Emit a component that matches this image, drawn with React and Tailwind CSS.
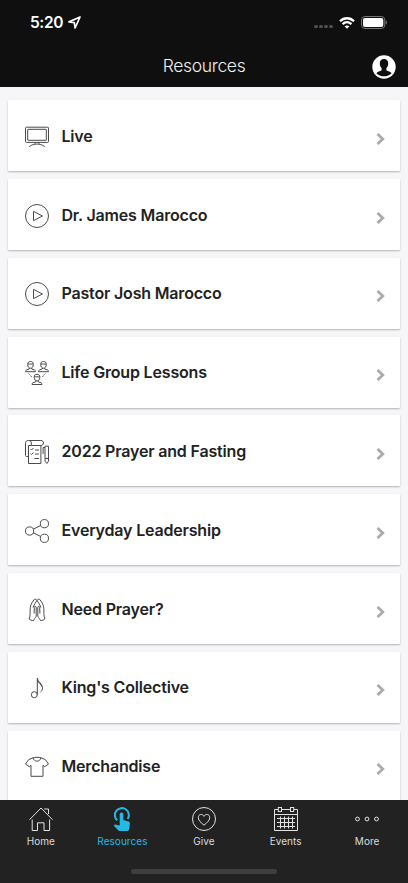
import React from 'react';

const LineIcon = ({ children, className = "text-[#4a4a4a]" }) => (
    <svg
        viewBox="0 0 24 24"
        fill="none"
        stroke="currentColor"
        strokeWidth="1"
        className={`block w-6 h-6 shrink-0 overflow-visible ${className}`}
    >
        {children}
    </svg>
);

const TvIcon = () => (
    <LineIcon>
        <rect x="0.5" y="2.2" width="23" height="15.2" rx="1" />
        <rect x="2.7" y="4.3" width="18.6" height="11" rx="0.3" />
        <path d="M10 17.5v1.4M14 17.5v1.4M4.2 21.6C7 19.6 9.5 19.1 12 19.1s5 .5 7.8 2.5" />
    </LineIcon>
);

const PlayIcon = () => (
    <LineIcon>
        <circle cx="12" cy="12" r="11.5" />
        <path d="M8.5 7.4v9.2l9-4.6z" />
    </LineIcon>
);

const Person = ({ x, y }) => (
    <g transform={`translate(${x} ${y})`}>
        <path d="M2.7 3.6C2.5 1.5 3.7.5 5.5.5s3 1 2.8 3.1c-.1 2.2-1.2 3.6-2.8 3.6S2.8 5.8 2.7 3.6zM2.9 3c1.5.3 3.500-.1 5.200 0" />
        <path d="M4.3 7v1L1.5 8.900C.8 9.200.5 9.700.5 10.700h10c0-1-.3-1.500-1-1.800L6.700 8V7" />
    </g>
);

const GroupIcon = () => (
    <LineIcon>
        <Person x={0} y={0} />
        <Person x={13} y={0} />
        <Person x={6.5} y={12.8} />
        <path d="M3.8 12.500l1 1.200M5.600 14.600l1 1.200M20.200 12.500l-1 1.200M18.400 14.600l-1 1.200" />
    </LineIcon>
);

const NotesIcon = () => (
    <LineIcon>
        <path d="M3.500 16.500H1.500c-.6 0-1-.4-1-1V3.500c0-2 1-3 3-3h12.400c1.600 0 2.500 1 2.500 2.500s-1 2.500-2.500 2.500H6.300V3c0-1.600-1-2.500-2.400-2.500M3.500 5.500v18h12.400v-18M3.500 5.500h2.800" />
        <path d="M5.500 9l1 1 2-2M5.500 13.500l1 1 2-2M10 10h4M10 14h4M9.500 18.500h4.500" />
        <path d="M20 7.500V6.200h3.500v15l-1.700 2.300L20 21.200zM20 7.500h-1.900V14M20 18.500h3.500" />
    </LineIcon>
);

const ShareIcon = () => (
    <LineIcon>
        <circle cx="4.6" cy="12" r="4.1" />
        <circle cx="19.4" cy="4.7" r="4.1" />
        <circle cx="19.4" cy="19.3" r="4.1" />
        <path d="M8.300 10.200l7.400-3.700M8.300 13.800l7.400 3.700" />
    </LineIcon>
);

const PrayIcon = () => (
    <LineIcon>
        <path d="M11.900 2.300C11 .8 9.500.8 8.900 1.900 6.400 5 5.200 7.900 5.100 11.500c0 4.200.2 6.500-1 9.400.7 1 2.600 1.600 4.500 1.700.3-1.500 1.700-2.500 2.600-4.400V9.300c0-1.200-1.800-1.200-1.900 0l-.2 6.200" />
        <path d="M12.100 2.300C13 .8 14.500.8 15.100 1.900c2.500 3.100 3.700 6 3.800 9.600 0 4.200-.2 6.500 1 9.400-.7 1-2.600 1.600-4.500 1.700-.3-1.500-1.700-2.500-2.600-4.400V9.300c0-1.200 1.800-1.200 1.900 0l.2 6.200" />
        <path d="M12 2.300C10.600 4.800 9.100 6.300 8.100 9.500M12 2.300c1.400 2.500 2.900 4 3.900 7.200" />
    </LineIcon>
);

const MusicIcon = () => (
    <LineIcon>
        <circle cx="9.300" cy="18.700" r="3" />
        <path d="M12.300 18.700V2.200c.4 4.300 5.200 5.100 5.200 9.700 0 1.700-.7 3.100-2 4.100M12.300 4c1 3.100 3.700 4.100 4.700 6.500" />
    </LineIcon>
);

const ShirtIcon = () => (
    <LineIcon>
        <path d="M8.200 2.700L3.700 4.600.5 9l3.800 2.700 1.700-1.500v11.100h12V10.200l1.700 1.500L23.500 9l-3.200-4.400-4.500-1.900c-1.500-.5-6.100-.5-7.600 0z" />
        <path d="M8.200 2.700c.3 4.600 7.300 4.600 7.600 0" />
    </LineIcon>
);

const HomeIcon = () => (
    <LineIcon className="text-[#e2e2e2]">
        <path d="M.5 12.700L12 1l11.500 11.700M3.200 12.500v11h5.300v-7.700h6.500v7.700h5.600v-11M15.200 2h4.300v5" />
    </LineIcon>
);

const TouchIcon = () => (
    <LineIcon className="text-[#25b9e6]">
        <path strokeWidth="2" d="M7.200 13.300A7 7 0 1 1 17.700 12" />
        <path
            fill="currentColor"
            stroke="none"
            d="M9.700 7.300C9.700 6.200 10.500 5.500 11.500 5.500s1.900.7 1.900 1.800v5.800l5 1.300c1.200.4 1.700 1.200 1.500 2.400L19 22.600c-.2.900-.7 1.400-1.600 1.400h-7.500c-.6 0-1-.2-1.400-.6L3.800 18.700c.5-1 1.300-1.300 2.300-1l3.600.9z"
        />
    </LineIcon>
);

const HeartIcon = () => (
    <LineIcon className="text-[#e2e2e2]">
        <circle cx="12" cy="12" r="11.500" />
        <path d="M12 18.200C9 15.700 6.300 13.500 6.300 10.600c0-3.700 4.300-4.200 5.700-1.200 1.400-3 5.700-2.500 5.700 1.200 0 2.900-2.700 5.100-5.700 7.600z" />
    </LineIcon>
);

const CalendarIcon = () => (
    <LineIcon className="text-[#e2e2e2]">
        <path d="M4 2.500H.5v21h23v-21H20M7.500 2.500h9M.5 7.500h23" />
        <rect x="4.300" y="0.500" width="3.200" height="4" />
        <rect x="16.500" y="0.500" width="3.200" height="4" />
        <path d="M3 11.500h18M3 15.500h18M3 19.500h18M6.500 9.500v12M10.500 9.500v12M14.500 9.500v12M18.500 9.500v12" />
    </LineIcon>
);

const MoreIcon = () => (
    <LineIcon className="text-[#e2e2e2]">
        <circle cx="2.500" cy="12" r="1.900" />
        <circle cx="12" cy="12" r="1.900" />
        <circle cx="21.500" cy="12" r="1.900" />
    </LineIcon>
);

const resources = [
    { title: "Live", icon: TvIcon },
    { title: "Dr. James Marocco", icon: PlayIcon },
    { title: "Pastor Josh Marocco", icon: PlayIcon },
    { title: "Life Group Lessons", icon: GroupIcon },
    { title: "2022 Prayer and Fasting", icon: NotesIcon },
    { title: "Everyday Leadership", icon: ShareIcon },
    { title: "Need Prayer?", icon: PrayIcon },
    { title: "King's Collective", icon: MusicIcon },
    { title: "Merchandise", icon: ShirtIcon },
];

const tabs = [
    { label: "Home", icon: HomeIcon },
    { label: "Resources", icon: TouchIcon, active: true },
    { label: "Give", icon: HeartIcon },
    { label: "Events", icon: CalendarIcon },
    { label: "More", icon: MoreIcon },
];

const StatusBar = () => (
    <div className="flex items-center justify-between h-[45px] pl-[30px] pr-[21px]">
        <div className="flex items-center gap-[5px] text-white">
            <span className="text-[15.5px] leading-5 font-semibold tracking-[-0.4px]">5:20</span>
            <svg viewBox="0 0 13 13" className="w-[13px] h-[13px]" fill="none" stroke="currentColor" strokeWidth="1.7" strokeLinejoin="round">
                <path d="M12 1L1 5.900l5.300.8.800 5.300z" />
            </svg>
        </div>
        <div className="flex items-center">
            <div className="flex gap-[1.5px] mt-2 mr-[6.5px]">
                {[0, 1, 2, 3].map((dot) => (
                    <span key={dot} className="w-[3.5px] h-[3.5px] rounded-full bg-[#505050]" />
                ))}
            </div>
            <svg viewBox="0 0 16 12" className="w-4 h-3 mr-[6px]" fill="none" stroke="#fff" strokeWidth="2.3">
                <path d="M1 4.300C5 .2 11 .2 15 4.300M3.600 7.100c2.600-2.500 6.200-2.500 8.800 0" />
                <path d="M8 11.700L5.600 9.300c1.400-1.200 3.400-1.200 4.800 0z" fill="#fff" stroke="none" />
            </svg>
            <svg viewBox="0 0 26 13" className="w-[26px] h-[13px]">
                <rect x="0.5" y="0.5" width="23.3" height="12" rx="3.5" fill="none" stroke="#777" />
                <rect x="2" y="2" width="20.3" height="9" rx="2" fill="#fff" />
                <path d="M24.700 4.500c1.600.5 1.600 3.500 0 4z" fill="#777" />
            </svg>
        </div>
    </div>
);

const ResourceCard = ({ title, icon: Icon }) => (
    <div className="flex items-center h-[71px] shrink-0 pl-[17px] pr-[15px] bg-white rounded-[1px] shadow-[0_1px_2px_rgba(0,0,0,0.28)]">
        <div className="mt-[2px]">
            <Icon />
        </div>
        <span className="ml-[12.5px] flex-1 text-[16px] leading-6 font-semibold tracking-[-0.18px] text-[#222]">{title}</span>
        <svg viewBox="0 0 9 12" className="w-[9px] h-3 mt-[6px]" fill="none" stroke="#ababab" strokeWidth="2.8">
            <path d="M1.500 1l5.300 5-5.300 5" />
        </svg>
    </div>
);

const App = () => {
    return (
        <div className="flex flex-col w-full h-screen overflow-hidden bg-[#f6f6f9] font-[Inter,sans-serif]">
            <header className="h-[87px] shrink-0 bg-[#0f0f0f]">
                <StatusBar />
                <div className="grid grid-cols-[1fr_auto_1fr] items-center h-[42px] px-3">
                    <span />
                    <h1 className="text-[17.5px] leading-6 font-light tracking-[-0.33px] text-[#eee]">Resources</h1>
                    <svg viewBox="0 0 24 24" className="w-6 h-6 mt-[2px] justify-self-end">
                        <circle cx="12" cy="12" r="11.7" fill="#fff" />
                        <path
                            fill="#0f0f0f"
                            d="M12 4c2.700 0 4.200 1.700 4.200 4.500 0 2-.7 3.700-1.800 4.800v1.900c1.500 1.100 4.300 1.200 5.200 3C17.800 20.300 15 21.300 12 21.300s-5.800-1-7.600-3.100c.9-1.800 3.700-1.900 5.200-3v-1.900C8.500 12.200 7.800 10.500 7.800 8.500 7.800 5.700 9.300 4 12 4z"
                        />
                    </svg>
                </div>
            </header>

            <main className="flex-1 min-h-0 overflow-hidden flex flex-col gap-[7.8px] px-2 pt-[13.3px]">
                {resources.map((item) => (
                    <ResourceCard key={item.title} title={item.title} icon={item.icon} />
                ))}
            </main>

            <nav className="h-[83px] shrink-0 flex flex-col items-center bg-[#222]">
                <div className="grid grid-cols-5 w-full pt-[7px]">
                    {tabs.map(({ label, icon: Icon, active }) => (
                        <div key={label} className="flex flex-col items-center gap-[3px]">
                            <Icon />
                            <span className={`text-[10px] leading-[14px] tracking-[0.05px] ${active ? "text-[#25b9e6]" : "text-[#dcdcdc]"}`}>
                                {label}
                            </span>
                        </div>
                    ))}
                </div>
                <div className="mt-[21px] w-[146px] h-[5px] rounded-full bg-[#3f3f3f]" />
            </nav>
        </div>
    );
};

export default App;
